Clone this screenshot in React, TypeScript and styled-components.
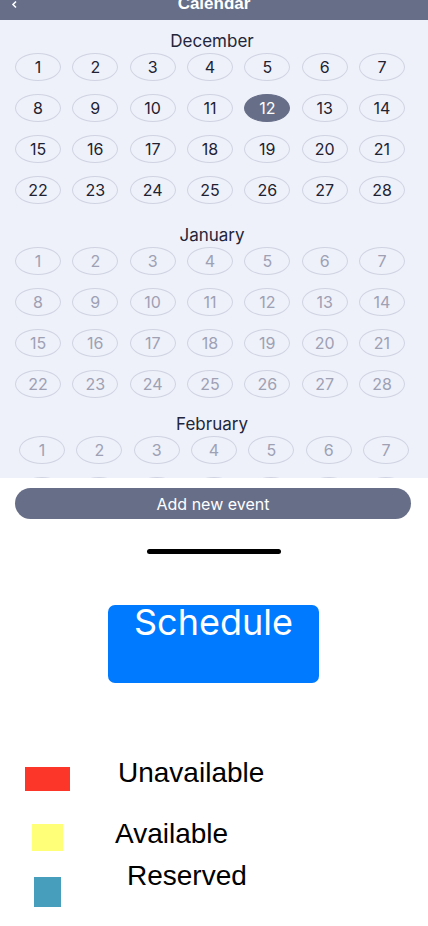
import React from 'react'
import styled, { createGlobalStyle } from 'styled-components'

const GlobalStyle = createGlobalStyle`
	html, body {
		margin: 0;
		padding: 0;
		background: #ffffff;
	}
	body {
		font-family: Inter, 'Noto Sans', sans-serif;
	}
`

const Screen = styled.div`
	width: 428px;
	height: 926px;
	overflow: hidden;
	display: flex;
	flex-direction: column;
	background: #ffffff;
`

const Header = styled.header`
	position: relative;
	height: 20px;
	flex-shrink: 0;
	background: #676e88;
	overflow: hidden;
	display: flex;
	justify-content: center;
`

const HeaderTitle = styled.div`
	margin-top: -6px;
	font-family: 'Liberation Sans', Arial, sans-serif;
	font-weight: bold;
	font-size: 17px;
	line-height: 20px;
	color: #ffffff;
`

const BackButton = styled.button`
	position: absolute;
	left: 11px;
	top: 0;
	padding: 0;
	border: 0;
	background: none;
	display: flex;
`

const Scroller = styled.div`
	height: 458px;
	flex-shrink: 0;
	overflow: hidden;
	background: #eef1f9;
	padding-top: 11px;
	box-sizing: border-box;
`

const Month = styled.section<{ $top: number }>`
	margin-top: ${(p) => p.$top}px;
`

const MonthTitle = styled.div`
	text-align: center;
	padding-right: 4px;
	font-size: 17px;
	line-height: 20px;
	color: #23263a;
`

const Days = styled.div<{ $shift: number }>`
	margin: 2px 0 0 ${(p) => 15 + p.$shift}px;
	width: 390px;
	display: grid;
	grid-template-columns: repeat(7, 46px);
	justify-content: space-between;
	row-gap: 13px;
`

const Day = styled.div<{ $muted?: boolean; $active?: boolean }>`
	height: 28px;
	box-sizing: border-box;
	border-radius: 50%;
	border: 1px solid ${(p) => (p.$active ? '#676e88' : '#d0d3e2')};
	background: ${(p) => (p.$active ? '#676e88' : 'transparent')};
	color: ${(p) => (p.$active ? '#ffffff' : p.$muted ? '#9ea0b4' : '#1f2232')};
	display: flex;
	align-items: center;
	justify-content: center;
	font-size: 16px;
`

const AddButton = styled.button`
	margin: 10px 0 0 15px;
	width: 396px;
	height: 31px;
	border: 0;
	border-radius: 16px;
	background: #676e88;
	color: #ffffff;
	font-family: Inter, sans-serif;
	font-size: 16px;
	padding: 0;
	flex-shrink: 0;
`

const HomeBar = styled.div`
	margin: 30px auto 0 147px;
	width: 134px;
	height: 5px;
	border-radius: 3px;
	background: #000000;
	flex-shrink: 0;
`

const ScheduleButton = styled.button`
	margin: 51px 0 0 108px;
	width: 211px;
	height: 78px;
	border: 0;
	border-radius: 7px;
	background: #007aff;
	color: #ffffff;
	font-family: Inter, sans-serif;
	font-size: 36px;
	line-height: 34px;
	padding: 0;
	display: flex;
	justify-content: center;
	align-items: flex-start;
	flex-shrink: 0;
`

const Legend = styled.div`
	margin-top: 74px;
	display: flex;
	flex-direction: column;
`

const LegendRow = styled.div<{ $top: number }>`
	display: flex;
	align-items: flex-start;
	margin-top: ${(p) => p.$top}px;
`

const Swatch = styled.div<{ $color: string; $w: number; $h: number; $x: number; $y: number }>`
	flex-shrink: 0;
	width: ${(p) => p.$w}px;
	height: ${(p) => p.$h}px;
	margin: ${(p) => p.$y}px 0 0 ${(p) => p.$x}px;
	background: ${(p) => p.$color};
`

const LegendLabel = styled.div<{ $x: number }>`
	margin-left: ${(p) => p.$x}px;
	font-family: 'Liberation Sans', Arial, sans-serif;
	font-size: 28px;
	line-height: 32px;
	color: #000000;
`

const days = Array.from({ length: 28 }, (_, i) => i + 1)

const months = [
	{ name: 'December', top: 0, shift: 0, muted: false },
	{ name: 'January', top: 21, shift: 0, muted: true },
	{ name: 'February', top: 16, shift: 4, muted: true },
]

const legend = [
	{ label: 'Unavailable', color: '#fc3629', w: 45, h: 24, x: 25, y: 10, labelX: 48, top: 0 },
	{ label: 'Available', color: '#ffff78', w: 31, h: 27, x: 32, y: 6, labelX: 52, top: 27 },
	{ label: 'Reserved', color: '#469ebc', w: 27, h: 30, x: 34, y: 17, labelX: 66, top: 9 },
]

export default function App() {
	return (
		<Screen>
			<GlobalStyle />
			<Header>
				<BackButton aria-label="Back">
					<svg width="7" height="10" viewBox="0 0 7 10">
						<polyline points="5,1.5 2,4.5 5,7.5" fill="none" stroke="#ffffff" strokeWidth="1.6" />
					</svg>
				</BackButton>
				<HeaderTitle>Calendar</HeaderTitle>
			</Header>
			<Scroller>
				{months.map((m) => (
					<Month key={m.name} $top={m.top}>
						<MonthTitle>{m.name}</MonthTitle>
						<Days $shift={m.shift}>
							{days.map((d) => (
								<Day key={d} $muted={m.muted} $active={!m.muted && d === 12}>
									{d}
								</Day>
							))}
						</Days>
					</Month>
				))}
			</Scroller>
			<AddButton>Add new event</AddButton>
			<HomeBar />
			<ScheduleButton>Schedule</ScheduleButton>
			<Legend>
				{legend.map((l) => (
					<LegendRow key={l.label} $top={l.top}>
						<Swatch $color={l.color} $w={l.w} $h={l.h} $x={l.x} $y={l.y} />
						<LegendLabel $x={l.labelX}>{l.label}</LegendLabel>
					</LegendRow>
				))}
			</Legend>
		</Screen>
	)
}
